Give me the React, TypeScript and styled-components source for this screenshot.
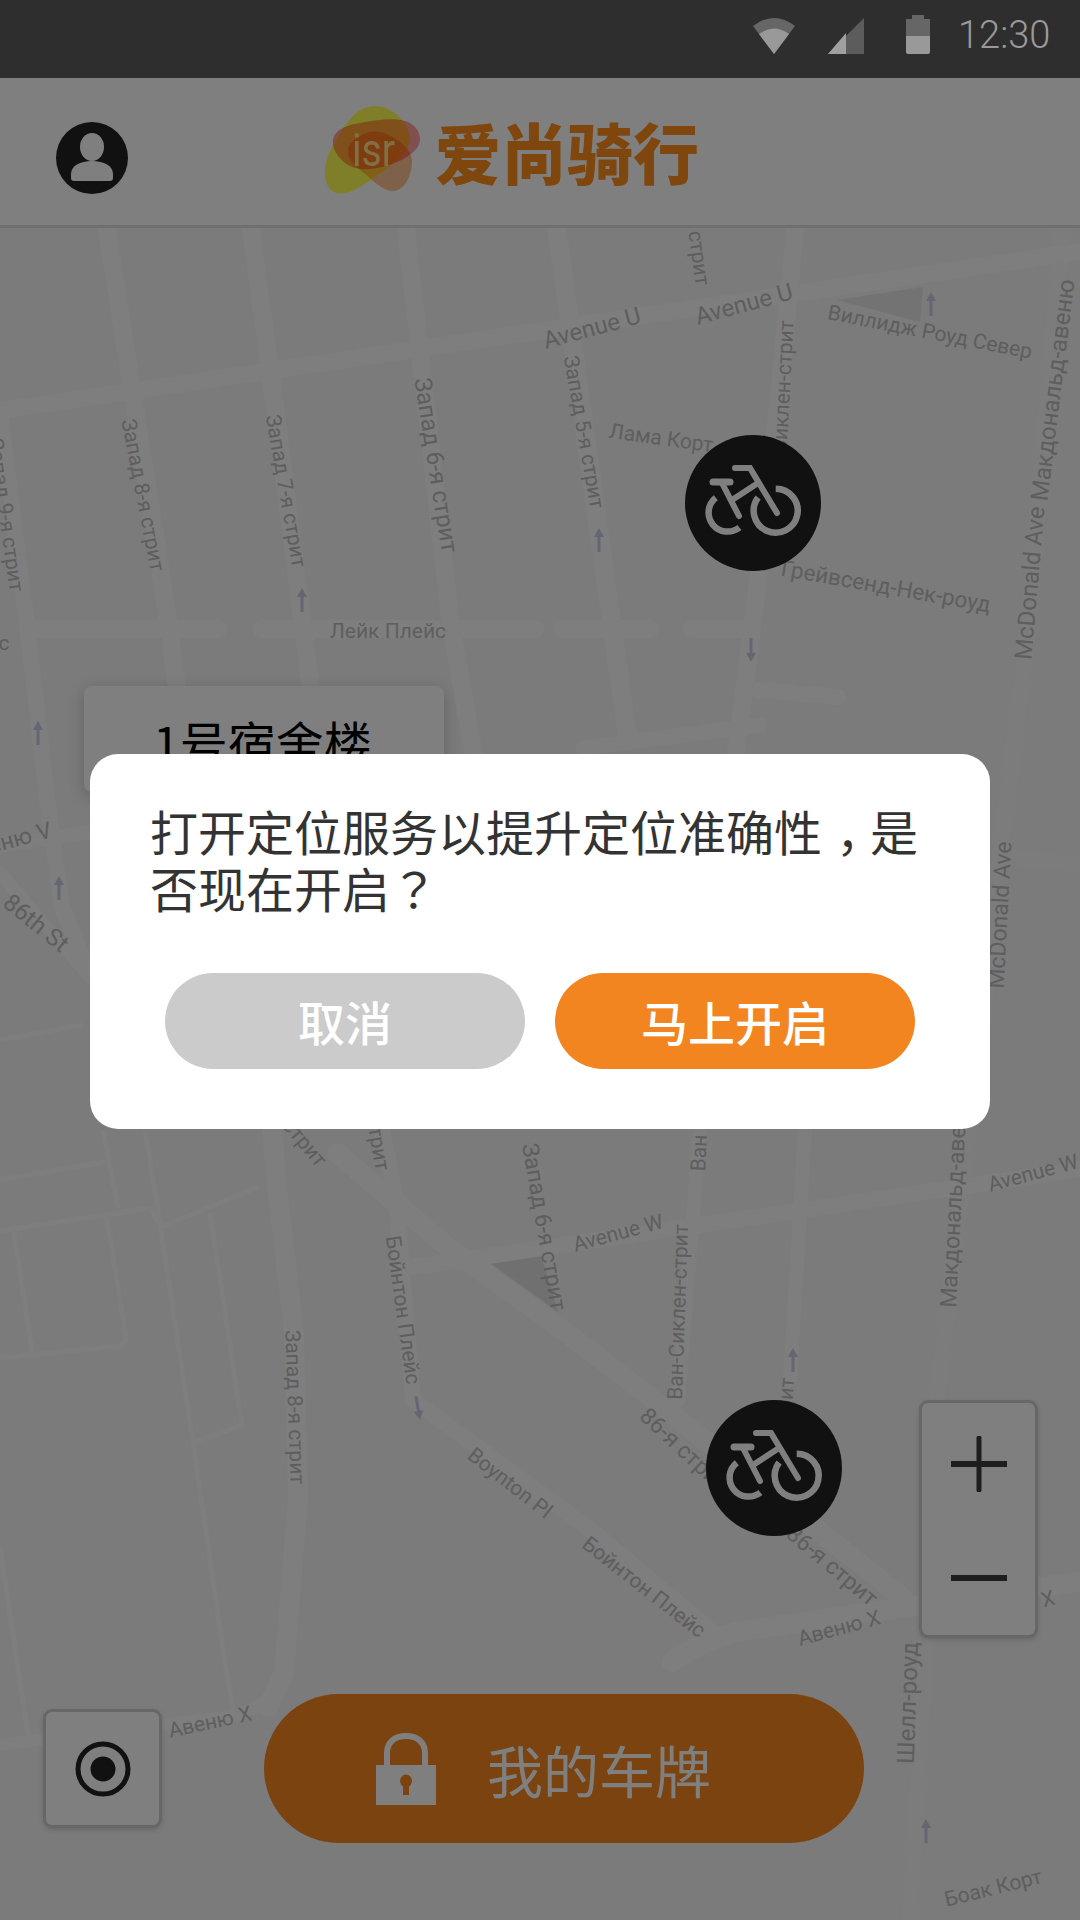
import React from 'react';
import styled, { createGlobalStyle } from 'styled-components';

const CJK = '"Noto Sans CJK SC", "Noto Sans", sans-serif';

const Global = createGlobalStyle`
  html, body { margin: 0; padding: 0; background: #7b7b7b; }
  * { box-sizing: border-box; }
`;

const Screen = styled.div`
  position: relative;
  width: 1080px;
  height: 1920px;
  overflow: hidden;
  display: flex;
  flex-direction: column;
  font-family: ${CJK};
`;

const StatusBar = styled.div`
  height: 78px;
  flex: none;
  background: #2e2e2e;
  display: flex;
  align-items: flex-start;
  padding: 15px 30px 0 753px;
`;
const StatusIcons = styled.svg`
  width: 177px;
  height: 39px;
  flex: none;
`;
const Clock = styled.span`
  margin-left: 28px;
  font: 300 38px/41px Roboto, sans-serif;
  color: #9a9a9a;
`;

const Header = styled.header`
  height: 150px;
  flex: none;
  background: #fff;
  border-bottom: 3px solid #dedede;
  display: flex;
  align-items: center;
  padding: 0 0 3px 56px;
`;
const Avatar = styled.svg`
  width: 72px;
  height: 72px;
  flex: none;
  margin-top: 16px;
`;
const Brand = styled.div`
  margin-left: 197px;
  display: flex;
  align-items: center;
  gap: 15px;
`;
const BrandMark = styled.svg`
  width: 95px;
  height: 88px;
  flex: none;
  isolation: isolate;
`;
const Blob = styled.path`
  mix-blend-mode: multiply;
`;
const BrandName = styled.span`
  font: 900 66px/74px ${CJK};
  color: #ff8f1c;
`;

const MapArea = styled.main`
  position: relative;
  flex: 1;
  background: #f6f6f6;
`;
const MapDrawing = styled.svg`
  display: block;
  width: 1080px;
  height: 1692px;
`;
const PlaceCard = styled.div`
  position: absolute;
  left: 84px;
  top: 458px;
  width: 360px;
  height: 106px;
  padding: 20px 0 0 69px;
  background: #fff;
  border-radius: 8px;
  box-shadow: 0 4px 16px rgba(0, 0, 0, 0.2);
  font: 400 48px/70px ${CJK};
  color: #000;
`;
const BikeMarker = styled.svg<{ $x: number; $y: number }>`
  position: absolute;
  left: ${p => p.$x}px;
  top: ${p => p.$y}px;
  width: 136px;
  height: 136px;
`;
const ZoomPanel = styled.div`
  position: absolute;
  left: 919px;
  top: 1172px;
  width: 119px;
  height: 238px;
  padding-top: 4px;
  background: #fff;
  border: 3px solid #cfcfcf;
  border-radius: 9px;
  box-shadow: 0 2px 5px rgba(0, 0, 0, 0.15);
  display: flex;
  flex-direction: column;
`;
const ZoomButton = styled.div`
  flex: 1;
  display: flex;
  align-items: center;
  justify-content: center;
`;
const ZoomGlyph = styled.svg`
  width: 56px;
  height: 56px;
`;
const LocateButton = styled.div`
  position: absolute;
  left: 43px;
  top: 1481px;
  width: 119px;
  height: 119px;
  background: #fff;
  border: 3px solid #cfcfcf;
  border-radius: 9px;
  box-shadow: 0 2px 5px rgba(0, 0, 0, 0.15);
  display: flex;
  align-items: center;
  justify-content: center;
`;
const LocateGlyph = styled.svg`
  width: 56px;
  height: 56px;
`;
const PlateButton = styled.div`
  position: absolute;
  left: 264px;
  top: 1466px;
  width: 600px;
  height: 149px;
  border-radius: 75px;
  background: #f48720;
  display: flex;
  align-items: center;
  padding-left: 112px;
  gap: 51px;
  font: 400 56px/70px ${CJK};
  color: #fff;
`;
const LockGlyph = styled.svg`
  width: 60px;
  height: 72px;
  flex: none;
`;

const Scrim = styled.div`
  position: absolute;
  left: 0;
  right: 0;
  top: 78px;
  bottom: 0;
  background: rgba(0, 0, 0, 0.5);
  padding: 676px 90px 0;
`;
const Dialog = styled.section`
  width: 900px;
  height: 375px;
  background: #fff;
  border-radius: 28px;
  padding: 48px 60px 0 60px;
`;
const Message = styled.p`
  margin: 0;
  height: 171px;
  font: 400 48px/57px ${CJK};
  color: #333;
`;
const Comma = styled.span`
  margin-left: 14px;
  margin-right: -14px;
`;
const Question = styled.span`
  font-family: "Noto Sans CJK TC", sans-serif;
`;
const Actions = styled.div`
  display: flex;
  gap: 30px;
  padding-left: 15px;
`;
const Action = styled.button<{ $primary?: boolean }>`
  width: 360px;
  height: 96px;
  border: 0;
  border-radius: 48px;
  background: ${p => (p.$primary ? '#f28520' : '#cbcbcb')};
  color: #fff;
  font: 500 47px/94px ${CJK};
  padding: 0;
`;

type Label = [string, number, number, number, number?];
const labels: Label[] = [
  ['стрит', 699, 258, 82],
  ['Avenue U', 592, 328, -15, 24],
  ['Avenue U', 744, 304, -15, 24],
  ['Виллидж Роуд Север', 930, 332, 11],
  ['Запад 9-я стрит', 6, 515, 82],
  ['Запад 8-я стрит', 143, 495, 79],
  ['Запад 7-я стрит', 286, 491, 80],
  ['Запад 6-я стрит', 436, 465, 81, 24],
  ['Запад 5-я стрит', 584, 432, 80],
  ['Лама Корт', 661, 438, 8],
  ['Ван-Сиклен-стрит', 782, 408, -87],
  ['Грейвсенд-Нек-роуд', 886, 586, 10, 22.5],
  ['Макдональд-авеню', 1053, 390, -83, 24],
  ['McDonald Ave', 1030, 583, -85, 24],
  ['McDonald Ave', 1000, 915, -87, 23],
  ['Лейк Плейс', 388, 631, 0],
  ['с', 4, 643, 0],
  ['еню V', 20, 838, -15, 23],
  ['86th St', 36, 923, 39, 24],
  ['86-я стрит', 290, 1125, 50],
  ['стрит', 378, 1143, 80],
  ['Запад 6-я стрит', 544, 1227, 80, 23],
  ['Avenue W', 618, 1233, -15],
  ['Ван-Сиклен-стрит', 678, 1312, -88],
  ['Ван', 699, 1153, -88],
  ['Avenue W', 1033, 1173, -15],
  ['Макдональд-авеню', 954, 1201, -87, 23],
  ['Бойнтон Плейс', 403, 1310, 82],
  ['Запад 8-я стрит', 295, 1407, 88],
  ['86-я стрит', 684, 1450, 43, 23],
  ['86-я стрит', 832, 1566, 40, 23],
  ['стрит', 785, 1405, -85],
  ['Boynton Pl', 510, 1483, 38],
  ['Бойнтон Плейс', 644, 1587, 38],
  ['Авеню X', 839, 1628, -15],
  ['X', 1048, 1599, -15],
  ['Авеню X', 210, 1722, -12],
  ['Шелл-роуд', 908, 1703, -88, 24],
  ['Боак Корт', 993, 1888, -14],
];

const roads: [string, number][] = [
  ['M-10 412L1090 250', 17],
  ['M107 230L131 382L169 626L190 790', 18],
  ['M251 230L272 385L303 626L320 760', 18],
  ['M406 230L451 626L475 760', 18],
  ['M557 230L607 590L628 740', 19],
  ['M795 230L778 406L757 590L735 760', 18],
  ['M0 412L29 640L48 807L62 907L90 975', 16],
  ['M35 629H218', 18],
  ['M262 629H535', 18],
  ['M562 629H650', 18],
  ['M692 629H745', 18],
  ['M760 690L838 697', 16],
  ['M0 846L90 832', 14],
  ['M583 748L760 725', 15],
  ['M0 873L90 977', 13],
  ['M337 1153L448 1247L572 1337L654 1400L902 1597', 20],
  ['M413 1267L1090 1168', 16],
  ['M382 1130L396 1200L413 1400L592 1531L716 1635', 16],
  ['M672 1662C690 1650 705 1640 735 1632L1090 1580', 20],
  ['M-10 1746L234 1716L272 1700', 12],
  ['M272 1130L278 1197L294 1330L298 1497L284 1673L268 1707', 20],
  ['M700 1130L678 1400', 14],
  ['M805 1130L790 1380', 14],
];

const faintRoads: [string, number][] = [
  ['M1062 230L1040 480L1026 650L1003 830L990 960L954 1253L937 1400L923 1700L909 1930', 16],
  ['M1007 857L1080 865', 15],
];

const thinRoads = [
  'M0 1180L105 1162',
  'M103 1130L118 1208',
  'M145 1130L160 1223L193 1443L223 1650L234 1716',
  'M0 1231L150 1208L158 1222',
  'M162 1227L258 1187',
  'M14 1232L32 1352',
  'M107 1218L126 1338Q127 1344 120 1346L0 1358',
  'M210 1213L242 1425L195 1442',
  'M0 1547L28 1735',
  'M0 1040L83 1025',
];

const arrows: [number, number, number][] = [
  [931, 304, 0],
  [599, 540, 0],
  [302, 600, 0],
  [38, 733, 0],
  [59, 888, 0],
  [751, 650, 180],
  [793, 1360, 0],
  [418, 1408, 170],
  [926, 1831, 0],
];

const Bike = () => (
  <g fill="none" stroke="#fff" strokeWidth="6.5" strokeLinecap="round">
    <path d="M73.1 62.5A22 22 0 1 0 90.7 53.7" strokeLinecap="butt" />
    <path d="M30.8 62.7A19 19 0 1 0 54.4 92.5" strokeLinecap="butt" />
    <path d="M50 33H65L92 78" strokeWidth="6" />
    <path d="M28 47H45" strokeWidth="7" />
    <path d="M37 48L54 81" strokeWidth="6" />
    <path d="M47 65L73 48" strokeWidth="6" />
  </g>
);

export default function App() {
  return (
    <Screen>
      <Global />
      <StatusBar>
        <StatusIcons viewBox="0 0 177 39">
          <path d="M0 11Q21 -5 42 11L21 39Z" fill="#666" />
          <path d="M6 19Q21 8 36 19L21 39Z" fill="#999" />
          <path d="M75 39H111V3Z" fill="#5c5c5c" />
          <path d="M75 39H93V18Z" fill="#a0a0a0" />
          <path d="M159 0H171V4H177V21H153V4H159Z" fill="#666" />
          <path d="M153 21H177V37Q177 39 175 39H155Q153 39 153 37Z" fill="#999" />
        </StatusIcons>
        <Clock>12:30</Clock>
      </StatusBar>
      <Header>
        <Avatar viewBox="0 0 72 72">
          <circle cx="36" cy="36" r="36" fill="#222" />
          <ellipse cx="36" cy="25" rx="12" ry="14" fill="#fff" />
          <path d="M15 56V52C15 44 24 39 36 39S57 44 57 52V56Q57 59 54 59H18Q15 59 15 56Z" fill="#fff" />
        </Avatar>
        <Brand>
          <BrandMark viewBox="0 0 95 88">
            <Blob d="M50 0C68 0 85 18 85 33C85 48 62 62 42 77C28 86 16 90 9 86C2 82 0 74 0 67C0 52 8 36 25 13C32 5 40 0 50 0Z" fill="#ffff54" />
            <Blob d="M25 38C35 28 45 24 55 26C70 30 87 42 87 55C87 72 78 85 68 85C58 85 50 76 40 68C30 60 18 50 25 38Z" fill="#ffc090" />
            <Blob d="M8 33C10 24 20 20 30 18C48 14 66 12 76 14C88 16 95 24 95 33C95 42 86 50 72 56C58 62 44 64 36 63C20 62 6 46 8 33Z" fill="#ffa09e" />
            <text x="27" y="60" fontFamily="Roboto, sans-serif" fontWeight="400" fontSize="46" textLength="43" lengthAdjust="spacingAndGlyphs" fill="#ffe08c">isr</text>
          </BrandMark>
          <BrandName>爱尚骑行</BrandName>
        </Brand>
      </Header>
      <MapArea>
        <MapDrawing viewBox="0 228 1080 1692">
          <path d="M837 300L923 287L920 322Z" fill="#e6e6e6" />
          <path d="M490 1263L541 1255L558 1312Z" fill="#e0e0e0" />
          {thinRoads.map(d => (
            <path key={d} d={d} fill="none" stroke="#fcfcfc" strokeWidth="5" />
          ))}
          {faintRoads.map(([d, w]) => (
            <path key={d} d={d} fill="none" stroke="#f9f9f9" strokeWidth={w} strokeLinecap="round" strokeLinejoin="round" />
          ))}
          {roads.map(([d, w]) => (
            <path key={d} d={d} fill="none" stroke="#fdfdfd" strokeWidth={w} strokeLinecap="round" strokeLinejoin="round" />
          ))}
          {arrows.map(([x, y, r]) => (
            <path key={`${x}-${y}`} transform={`translate(${x} ${y}) rotate(${r})`} d="M0 -12L5 -3H1.5V12H-1.5V-3H-5Z" fill="#c8cee6" />
          ))}
          {labels.map(([t, x, y, r, s], i) => (
            <text
              key={i}
              transform={`translate(${x} ${y}) rotate(${r})`}
              textAnchor="middle"
              dominantBaseline="central"
              fontFamily="Roboto, sans-serif"
              fontSize={s ?? 21}
              fill="#bdbdbd"
            >
              {t}
            </text>
          ))}
        </MapDrawing>
        <PlaceCard>1号宿舍楼</PlaceCard>
        <BikeMarker $x={685} $y={207} viewBox="0 0 136 136">
          <circle cx="68" cy="68" r="68" fill="#222" />
          <Bike />
        </BikeMarker>
        <BikeMarker $x={706} $y={1172} viewBox="0 0 136 136">
          <circle cx="68" cy="68" r="68" fill="#222" />
          <Bike />
        </BikeMarker>
        <ZoomPanel>
          <ZoomButton>
            <ZoomGlyph viewBox="0 0 56 56">
              <path d="M1 28H55" stroke="#3c3c3c" strokeWidth="6" strokeLinecap="round" />
              <path d="M28 2V54" stroke="#3c3c3c" strokeWidth="5" strokeLinecap="round" />
            </ZoomGlyph>
          </ZoomButton>
          <ZoomButton>
            <ZoomGlyph viewBox="0 0 56 56">
              <path d="M1 28H55" stroke="#3c3c3c" strokeWidth="6" strokeLinecap="round" />
            </ZoomGlyph>
          </ZoomButton>
        </ZoomPanel>
        <LocateButton>
          <LocateGlyph viewBox="0 0 56 56">
            <circle cx="28" cy="28" r="25" fill="none" stroke="#222" strokeWidth="5" />
            <circle cx="28" cy="28" r="12.5" fill="#222" />
          </LocateGlyph>
        </LocateButton>
        <PlateButton>
          <LockGlyph viewBox="0 0 60 72">
            <path d="M0 32H60V72H0Z" fill="#fff" />
            <path d="M11 32V20C11 9 19 3 30 3S49 9 49 20V32" fill="none" stroke="#fff" strokeWidth="6" />
            <ellipse cx="30" cy="48" rx="6" ry="6.5" fill="#f48720" />
            <path d="M27 49H33V62H27Z" fill="#f48720" />
          </LockGlyph>
          我的车牌
        </PlateButton>
      </MapArea>
      <Scrim>
        <Dialog>
          <Message>
            打开定位服务以提升定位准确性<Comma>，</Comma>是否现在开启<Question>？</Question>
          </Message>
          <Actions>
            <Action>取消</Action>
            <Action $primary>马上开启</Action>
          </Actions>
        </Dialog>
      </Scrim>
    </Screen>
  );
}
